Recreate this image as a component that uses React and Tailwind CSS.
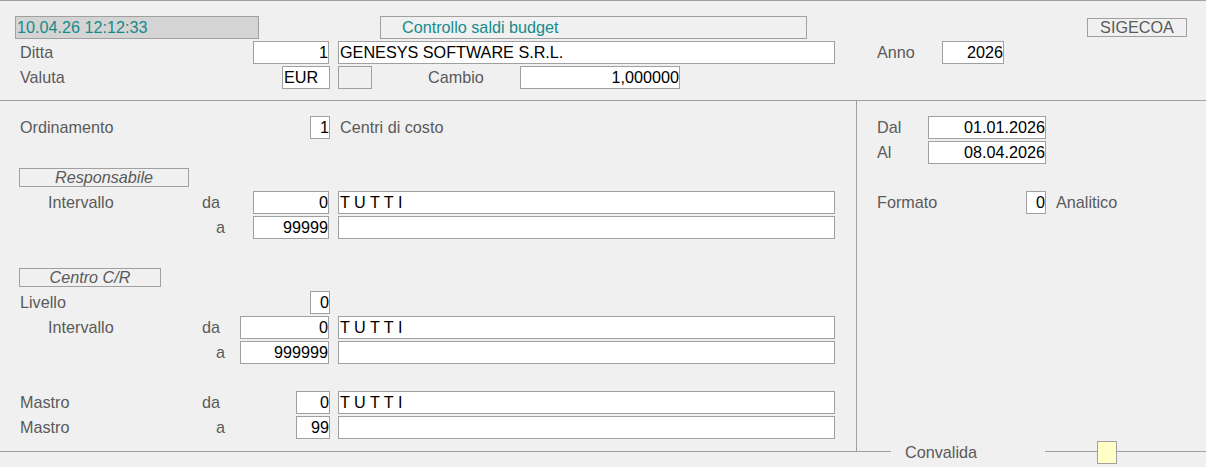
import React from "react";

const Field = ({ w, right = true, children, className = "" }) => (
  <div
    className={`h-[23px] ${w} shrink-0 bg-white border border-[#a0a0a0] flex items-center text-black leading-[18px] pb-[2px] ${right ? "justify-end pr-0" : "justify-start pl-px"} ${className}`}
  >
    {children}
  </div>
);

const Label = ({ w, className = "", children }) => (
  <span className={`${w} shrink-0 text-[#5a5a5a] leading-[18px] pb-[2px] ${className}`}>{children}</span>
);

const Row = ({ className = "", children }) => (
  <div className={`flex items-center h-[23px] ${className}`}>{children}</div>
);

const GroupBox = ({ w, children }) => (
  <div className={`mt-[29px] -ml-px ${w} h-[19px] border border-[#a0a0a0] flex items-center justify-center italic text-[#5a5a5a] leading-[17px]`}>
    {children}
  </div>
);

export default function App() {
  return (
    <div className="w-[1206px] h-[467px] bg-[#f0f0f0] font-['Liberation_Sans',Arial,sans-serif] text-[16.2px] overflow-hidden">
      {/* Top section */}
      <div className="h-[101px] border-t border-b border-[#a0a0a0] pt-[15px]">
        <div className="flex items-start h-[23px]">
          <div className="ml-[15px] w-[244px] h-[23px] bg-[#d4d4d4] border border-[#a0a0a0] flex items-center pl-px text-[#178b8b] leading-[18px] pb-[2px]">
            10.04.26 12:12:33
          </div>
          <div className="ml-[121px] w-[427px] h-[23px] border border-[#a0a0a0] flex items-center pl-[21px] text-[#178b8b] leading-[18px] pb-[2px]">
            Controllo saldi budget
          </div>
          <div className="ml-[280px] mt-[2px] w-[100px] h-[19px] border border-[#a0a0a0] flex items-center justify-center text-[#5a5a5a] leading-[17px] pb-px">
            SIGECOA
          </div>
        </div>
        <Row className="mt-[2px] pl-[20px]">
          <Label w="w-[233px]">Ditta</Label>
          <Field w="w-[76px]">1</Field>
          <Field w="w-[497px]" right={false} className="ml-[9px]">GENESYS SOFTWARE S.R.L.</Field>
          <Label w="w-[65px]" className="ml-[42px]">Anno</Label>
          <Field w="w-[62px]">2026</Field>
        </Row>
        <Row className="mt-[2px] pl-[20px]">
          <Label w="w-[262px]">Valuta</Label>
          <Field w="w-[48px]" right={false}>EUR</Field>
          <div className="ml-[8px] w-[34px] h-[23px] border border-[#a0a0a0]" />
          <Label w="w-[92px]" className="ml-[56px]">Cambio</Label>
          <Field w="w-[160px]">1,000000</Field>
        </Row>
      </div>

      {/* Main section */}
      <div className="flex h-[350px]">
        <div className="w-[856px] shrink-0 pl-[20px] pt-[15px]">
          <Row>
            <Label w="w-[290px]">Ordinamento</Label>
            <Field w="w-[20px]">1</Field>
            <Label w="w-auto" className="ml-[9px] pl-px">Centri di costo</Label>
          </Row>

          <GroupBox w="w-[170px]">Responsabile</GroupBox>
          <Row className="mt-[4px]">
            <Label w="w-[182px]" className="pl-[28px]">Intervallo</Label>
            <Label w="w-[51px]">da</Label>
            <Field w="w-[76px]">0</Field>
            <Field w="w-[497px]" right={false} className="ml-[9px]">T U T T I</Field>
          </Row>
          <Row className="mt-[2px]">
            <Label w="w-[196px]"></Label>
            <Label w="w-[37px]">a</Label>
            <Field w="w-[76px]">99999</Field>
            <Field w="w-[497px]" right={false} className="ml-[9px]"></Field>
          </Row>

          <GroupBox w="w-[142px]">Centro C/R</GroupBox>
          <Row className="mt-[4px]">
            <Label w="w-[290px]">Livello</Label>
            <Field w="w-[20px]">0</Field>
          </Row>
          <Row className="mt-[2px]">
            <Label w="w-[182px]" className="pl-[28px]">Intervallo</Label>
            <Label w="w-[38px]">da</Label>
            <Field w="w-[89px]">0</Field>
            <Field w="w-[497px]" right={false} className="ml-[9px]">T U T T I</Field>
          </Row>
          <Row className="mt-[2px]">
            <Label w="w-[196px]"></Label>
            <Label w="w-[24px]">a</Label>
            <Field w="w-[89px]">999999</Field>
            <Field w="w-[497px]" right={false} className="ml-[9px]"></Field>
          </Row>

          <Row className="mt-[27px]">
            <Label w="w-[182px]">Mastro</Label>
            <Label w="w-[94px]">da</Label>
            <Field w="w-[34px]">0</Field>
            <Field w="w-[497px]" right={false} className="ml-[8px]">T U T T I</Field>
          </Row>
          <Row className="mt-[2px]">
            <Label w="w-[196px]">Mastro</Label>
            <Label w="w-[80px]">a</Label>
            <Field w="w-[34px]">99</Field>
            <Field w="w-[497px]" right={false} className="ml-[8px]"></Field>
          </Row>
        </div>

        <div className="flex-1 border-l border-[#a0a0a0] pl-[20px] pt-[15px]">
          <Row>
            <Label w="w-[51px]">Dal</Label>
            <Field w="w-[118px]">01.01.2026</Field>
          </Row>
          <Row className="mt-[2px]">
            <Label w="w-[51px]">Al</Label>
            <Field w="w-[118px]">08.04.2026</Field>
          </Row>
          <Row className="mt-[27px]">
            <Label w="w-[149px]">Formato</Label>
            <Field w="w-[20px]">0</Field>
            <Label w="w-auto" className="ml-[9px] pl-px">Analitico</Label>
          </Row>
        </div>
      </div>

      {/* Bottom: Convalida */}
      <div className="relative -mt-[10px] flex h-[23px]">
        <div className="w-[891px] h-px mt-[10px] bg-[#a0a0a0]" />
        <div className="w-[154px] h-[23px] flex items-center pl-[14px] text-[#5a5a5a] leading-[18px] pb-[1px]">Convalida</div>
        <div className="flex-1 flex">
          <div className="w-[52px] h-px mt-[10px] bg-[#a0a0a0]" />
          <div className="w-[20px] h-[23px] bg-[#ffffc6] border border-[#a0a0a0]" />
          <div className="flex-1 h-px mt-[10px] bg-[#a0a0a0]" />
        </div>
      </div>
    </div>
  );
}
